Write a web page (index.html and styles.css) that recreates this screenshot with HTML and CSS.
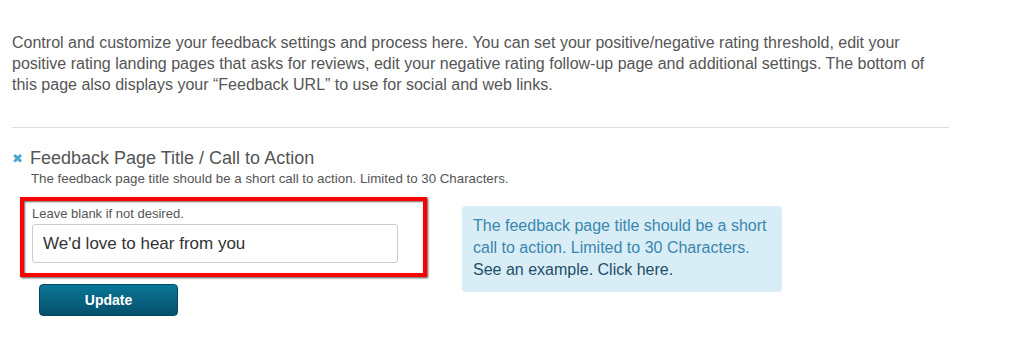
FILE: index.html
```html
<!DOCTYPE html>
<html lang="en">
<head>
  <meta charset="UTF-8">
  <title>Feedback Settings</title>
  <link rel="stylesheet" href="styles.css">
</head>
<body>
  <div class="page">
    <p class="intro">Control and customize your feedback settings and process here. You can set your positive/negative rating threshold, edit your positive rating landing pages that asks for reviews, edit your negative rating follow-up page and additional settings. The bottom of this page also displays your “Feedback URL” to use for social and web links.</p>

    <hr class="divider">

    <!-- Feedback page title section -->
    <div class="section">
      <h3 class="section-title"><span class="toggle">&#10006;</span>Feedback Page Title / Call to Action</h3>
      <p class="section-desc">The feedback page title should be a short call to action. Limited to 30 Characters.</p>

      <div class="section-body">
        <div class="form-col">
          <div class="highlight">
            <label class="hint" for="title">Leave blank if not desired.</label>
            <input type="text" id="title" class="text-input" value="We'd love to hear from you">
          </div>
          <button class="btn-update">Update</button>
        </div>

        <div class="info-box">
          The feedback page title should be a short call to action. Limited to 30 Characters.
          <a href="#" class="info-link">See an example. Click here.</a>
        </div>
      </div>
    </div>
  </div>
</body>
</html>
```

FILE: styles.css
```css
body {
  margin: 0;
  font-family: Arial, "Liberation Sans", sans-serif;
  color: #555;
  background: #fff;
}

.page {
  padding: 32px 12px 0 12px;
  width: 937px;
}

.intro {
  margin: 0;
  font-size: 16px;
  line-height: 21px;
  width: 920px;
}

.divider {
  border: 0;
  border-top: 1px solid #ddd;
  margin: 32px 0 0 0;
}

.section {
  padding-top: 20px;
}

.section-title {
  margin: 0;
  font-size: 18px;
  font-weight: normal;
  line-height: 20px;
  color: #555;
}

.toggle {
  display: inline-block;
  width: 18px;
  font-size: 13px;
  color: #4aa7d2;
  vertical-align: 1px;
}

.section-desc {
  margin: 1px 0 0 19px;
  font-size: 13.3px;
  line-height: 17px;
}

.section-body {
  display: flex;
  align-items: flex-start;
  margin-top: 10px;
}

.form-col {
  width: 440px;
}

.highlight {
  margin-left: 8px;
  width: 391px;
  padding: 5px 0 10px 8px;
  border: 4px solid #f00;
  box-shadow: 1px 1px 2px rgba(0, 0, 0, 0.7), inset 1px 1px 2px rgba(0, 0, 0, 0.6);
}

.hint {
  display: block;
  font-size: 13px;
  line-height: 15px;
  color: #555;
}

.text-input {
  display: block;
  box-sizing: border-box;
  width: 366px;
  height: 39px;
  margin-top: 3px;
  padding: 0 10px;
  border: 1px solid #ccc;
  border-radius: 3px;
  font-family: Arial, "Liberation Sans", sans-serif;
  font-size: 17px;
  color: #333;
}

.btn-update {
  display: block;
  margin: 7px 0 0 27px;
  width: 139px;
  height: 32px;
  border: 1px solid #05475e;
  border-radius: 4px;
  background: linear-gradient(#0a7697, #05506b);
  color: #fff;
  font-family: Arial, "Liberation Sans", sans-serif;
  font-size: 14px;
  font-weight: bold;
}

.info-box {
  margin-top: 9px;
  margin-left: 10px;
  width: 298px;
  padding: 9px 11px 11px 11px;
  background: #d9edf7;
  border-radius: 4px;
  color: #3a87ad;
  font-size: 16px;
  line-height: 22px;
}

.info-link {
  display: block;
  color: #1f4f68;
  text-decoration: none;
}
```
